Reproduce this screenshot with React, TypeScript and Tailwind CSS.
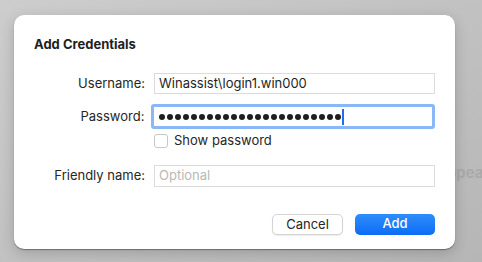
import React from "react";

const font = { fontFamily: "Inter, 'Liberation Sans', sans-serif" };

function Field({ label, children }: { label: string; children: React.ReactNode }) {
  return (
    <div className="flex items-center">
      <div className="w-[120px] pr-[9px] text-right text-[13px] text-[#262626]">{label}</div>
      {children}
    </div>
  );
}

export default function App() {
  return (
    <div
      className="relative h-[262px] w-[482px] overflow-hidden bg-gradient-to-br from-[#cdcdcd] to-[#b6b6b6]"
      style={font}
    >
      <div className="absolute left-[436px] top-[162px] text-[15px] font-semibold text-[#a9a9a9]">Appear</div>

      <div className="relative ml-[14px] mt-[15px] h-[234px] w-[441px] rounded-[10px] bg-white px-[20px] pt-[21px] shadow-[0_1px_1px_rgba(0,0,0,0.35),0_4px_14px_rgba(0,0,0,0.18)]">
        <div className="text-[13px] font-bold leading-[16px] text-[#1f1f1f]">Add Credentials</div>

        <div className="mt-[21px] flex flex-col">
          <Field label="Username:">
            <div className="flex h-[21px] w-[281px] items-center border border-[#dcdcdc] px-[4px] text-[13px] text-[#1f1f1f]">
              Winassist\login1.win000
            </div>
          </Field>

          <div className="mt-[10px]">
            <Field label="Password:">
              <div className="ml-[-2px] flex h-[25px] w-[285px] items-center rounded-[3px] border-[3px] border-[#8ab8f7] bg-white pl-[5px]">
                <div className="flex gap-[2px]" aria-label="password">
                  {Array.from({ length: 23 }).map((_, i) => (
                    <span key={i} className="h-[6px] w-[6px] rounded-full bg-[#1f1f1f]" />
                  ))}
                </div>
                <span className="ml-[1px] h-[16px] w-[2px] bg-[#1c6ef2]" />
              </div>
            </Field>
          </div>

          <div className="ml-[120px] mt-[2px] flex items-center">
            <div className="h-[14px] w-[14px] rounded-[3px] border border-[#c8c8c8] bg-white" />
            <span className="ml-[6px] text-[13px] text-[#262626]">Show password</span>
          </div>

          <div className="mt-[14px]">
            <Field label="Friendly name:">
              <div className="flex h-[22px] w-[281px] items-center border border-[#dcdcdc] px-[4px] text-[13px] text-[#b8b8b8]">
                Optional
              </div>
            </Field>
          </div>
        </div>

        <div className="mt-[27px] flex justify-end gap-[12px]">
          <button className="h-[21px] w-[71px] rounded-[5px] border border-[#d4d4d4] bg-white text-[13px] text-[#262626] shadow-[0_1px_1px_rgba(0,0,0,0.08)]">
            Cancel
          </button>
          <button className="h-[21px] w-[80px] rounded-[5px] bg-gradient-to-b from-[#2f8cfb] to-[#0a6cf5] text-[13px] font-medium text-white">
            Add
          </button>
        </div>
      </div>
    </div>
  );
}
